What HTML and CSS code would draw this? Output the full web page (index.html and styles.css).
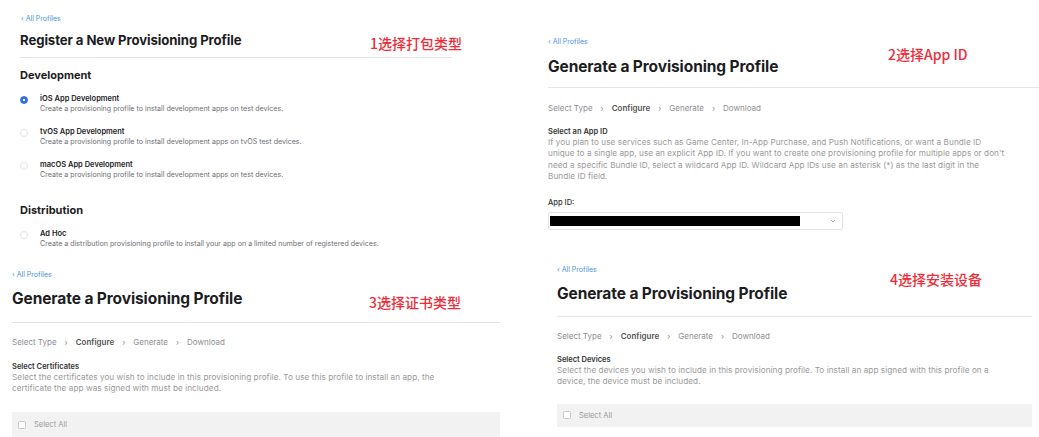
FILE: index.html
```html
<!DOCTYPE html>
<html>
<head>
<meta charset="UTF-8">
<title>Provisioning Profile Steps</title>
<link rel="stylesheet" href="styles.css">
</head>
<body>
<div class="sheet">

  <div class="col">
    <!-- step 1: profile type -->
    <section class="shot shot-type">
      <a class="back" href="#">&lsaquo; All Profiles</a>
      <div class="head">
        <h1 class="title small">Register a New Provisioning Profile</h1>
      </div>
      <h2 class="group">Development</h2>
      <div class="option">
        <span class="radio on"></span>
        <div>
          <div class="opt-name">iOS App Development</div>
          <div class="opt-desc">Create a provisioning profile to install development apps on test devices.</div>
        </div>
      </div>
      <div class="option">
        <span class="radio"></span>
        <div>
          <div class="opt-name">tvOS App Development</div>
          <div class="opt-desc">Create a provisioning profile to install development apps on tvOS test devices.</div>
        </div>
      </div>
      <div class="option">
        <span class="radio"></span>
        <div>
          <div class="opt-name">macOS App Development</div>
          <div class="opt-desc">Create a provisioning profile to install development apps on test devices.</div>
        </div>
      </div>
      <h2 class="group dist">Distribution</h2>
      <div class="option">
        <span class="radio"></span>
        <div>
          <div class="opt-name">Ad Hoc</div>
          <div class="opt-desc">Create a distribution provisioning profile to install your app on a limited number of registered devices.</div>
        </div>
      </div>
      <span class="note">1选择打包类型</span>
    </section>

    <!-- step 3: certificates -->
    <section class="shot shot-certs">
      <a class="back" href="#">&lsaquo; All Profiles</a>
      <div class="head">
        <h1 class="title">Generate a Provisioning Profile</h1>
      </div>
      <div class="crumbs">
        <span>Select Type</span><i>&rsaquo;</i><b>Configure</b><i>&rsaquo;</i><span>Generate</span><i>&rsaquo;</i><span>Download</span>
      </div>
      <div class="field-title">Select Certificates</div>
      <p class="help">Select the certificates you wish to include in this provisioning profile. To use this profile to install an app, the certificate the app was signed with must be included.</p>
      <div class="select-all"><span class="check"></span>Select All</div>
      <span class="note">3选择证书类型</span>
    </section>
  </div>

  <div class="col">
    <!-- step 2: app id -->
    <section class="shot shot-appid">
      <a class="back" href="#">&lsaquo; All Profiles</a>
      <div class="head">
        <h1 class="title">Generate a Provisioning Profile</h1>
      </div>
      <div class="crumbs">
        <span>Select Type</span><i>&rsaquo;</i><b>Configure</b><i>&rsaquo;</i><span>Generate</span><i>&rsaquo;</i><span>Download</span>
      </div>
      <div class="field-title">Select an App ID</div>
      <p class="help">If you plan to use services such as Game Center, In-App Purchase, and Push Notifications, or want a Bundle ID unique to a single app, use an explicit App ID. If you want to create one provisioning profile for multiple apps or don't need a specific Bundle ID, select a wildcard App ID. Wildcard App IDs use an asterisk (*) as the last digit in the Bundle ID field.</p>
      <div class="label">App ID:</div>
      <div class="select">
        <span class="redacted"></span>
        <svg class="chev" width="6" height="4" viewBox="0 0 6 4"><path d="M1 1l2 2 2-2" fill="none" stroke="#999" stroke-width="0.8"/></svg>
      </div>
      <span class="note">2选择App ID</span>
    </section>

    <!-- step 4: devices -->
    <section class="shot shot-devices">
      <a class="back" href="#">&lsaquo; All Profiles</a>
      <div class="head">
        <h1 class="title">Generate a Provisioning Profile</h1>
      </div>
      <div class="crumbs">
        <span>Select Type</span><i>&rsaquo;</i><b>Configure</b><i>&rsaquo;</i><span>Generate</span><i>&rsaquo;</i><span>Download</span>
      </div>
      <div class="field-title">Select Devices</div>
      <p class="help">Select the devices you wish to include in this provisioning profile. To install an app signed with this profile on a device, the device must be included.</p>
      <div class="select-all"><span class="check"></span>Select All</div>
      <span class="note">4选择安装设备</span>
    </section>
  </div>

</div>
</body>
</html>
```

FILE: styles.css
```css
body {
  margin: 0;
  background: #ffffff;
  font-family: Inter, "Noto Sans", "Noto Sans CJK SC", sans-serif;
  color: #1d1d1f;
}
.sheet {
  display: grid;
  grid-template-columns: 520px 519px;
  height: 437px;
  overflow: hidden;
}
.col {
  display: flex;
  flex-direction: column;
  min-height: 0;
}
.shot {
  position: relative;
  box-sizing: border-box;
  display: flex;
  flex-direction: column;
  overflow: hidden;
  flex: none;
}

/* shared bits */
.back {
  display: block;
  font-size: 7px;
  line-height: 10px;
  color: #4a90e2;
  text-decoration: none;
}
.head {
  border-bottom: 1px solid #e6e6e6;
}
.title {
  margin: 0;
  font-size: 15.5px;
  line-height: 20px;
  font-weight: 700;
  letter-spacing: -0.1px;
}
.title.small {
  font-size: 13.2px;
  line-height: 16px;
}
.crumbs {
  display: flex;
  align-items: center;
  font-size: 8px;
  line-height: 10px;
  color: #8e8e93;
}
.crumbs i {
  font-style: normal;
  margin: 0 8px;
  color: #888;
}
.crumbs b {
  color: #555;
  font-weight: 600;
}
.field-title {
  font-size: 7.5px;
  line-height: 10px;
  font-weight: 600;
  color: #333;
}
.help {
  margin: 0;
  font-size: 8.2px;
  line-height: 11.4px;
  letter-spacing: 0.05px;
  color: #9a9a9a;
}
.select-all {
  display: flex;
  align-items: center;
  background: #f2f2f2;
  font-size: 7.5px;
  color: #999;
  flex: none;
}
.check {
  width: 6px;
  height: 6px;
  border: 1px solid #c8c8c8;
  border-radius: 1.5px;
  background: #fff;
  margin-right: 8px;
}
.note {
  position: absolute;
  font-size: 14px;
  line-height: 18px;
  font-weight: 500;
  color: #ef2d3a;
  font-family: "Noto Sans CJK SC", sans-serif;
}

/* step 1 */
.shot-type {
  height: 262px;
  padding: 14px 68px 0 20px;
}
.shot-type .back {
  margin-left: 1px;
}
.shot-type .head {
  margin-top: 8px;
  padding-bottom: 9px;
}
.group {
  margin: 10px 0 0;
  font-size: 11px;
  line-height: 14px;
  font-weight: 700;
}
.group.dist {
  margin-top: 23px;
}
.option {
  display: flex;
  margin-top: 13px;
}
.group + .option {
  margin-top: 12px;
}
.radio {
  width: 6px;
  height: 6px;
  margin: 2px 12px 0 0;
  border: 1px solid #e2e2e2;
  border-radius: 50%;
  background: #fff;
  flex: none;
}
.radio.on {
  border-color: #2d6fe3;
  background: radial-gradient(circle, #ffffff 0 1.2px, #2d6fe3 1.6px);
}
.opt-name {
  font-size: 7.5px;
  line-height: 10px;
  font-weight: 600;
}
.opt-desc {
  font-size: 7.1px;
  line-height: 10px;
  color: #6e6e73;
}
.shot-type .note {
  left: 370px;
  top: 34px;
}

/* step 3 */
.shot-certs {
  height: 175px;
  padding: 8px 20px 0 12px;
}
.shot-certs .head {
  margin-top: 9px;
  padding-bottom: 13px;
}
.shot-certs .crumbs {
  margin-top: 14px;
}
.shot-certs .field-title {
  margin-top: 15px;
}
.shot-certs .help {
  max-width: 445px;
}
.shot-certs .select-all {
  margin-top: 17px;
  height: 26px;
  padding-left: 6px;
}
.shot-certs .note {
  left: 369px;
  top: 31px;
}

/* step 2 */
.shot-appid {
  height: 258px;
  padding: 37px 0 0 28px;
}
.shot-appid .head {
  margin-top: 10px;
  padding-bottom: 10px;
}
.shot-appid .crumbs {
  margin-top: 15px;
}
.shot-appid .field-title {
  margin-top: 14px;
}
.shot-appid .help {
  max-width: 458px;
}
.label {
  margin-top: 15px;
  font-size: 7.5px;
  line-height: 10px;
  font-weight: 500;
  color: #333;
}
.select {
  display: flex;
  align-items: center;
  justify-content: space-between;
  width: 292px;
  height: 16px;
  margin-top: 4px;
  border: 1px solid #e4e4e4;
  border-radius: 2px;
  padding-left: 1px;
}
.redacted {
  width: 250px;
  height: 10px;
  background: #000;
}
.chev {
  margin-right: 6px;
}
.shot-appid .note {
  left: 368px;
  top: 45px;
}

/* step 4 */
.shot-devices {
  height: 179px;
  padding: 7px 7px 0 37px;
}
.shot-devices .head {
  margin-top: 9px;
  padding-bottom: 12px;
}
.shot-devices .crumbs {
  margin-top: 14px;
}
.shot-devices .field-title {
  margin-top: 14px;
}
.shot-devices .help {
  max-width: 450px;
}
.shot-devices .select-all {
  margin-top: 16px;
  height: 23px;
  padding-left: 6px;
}
.shot-devices .note {
  left: 370px;
  top: 12px;
}
```
